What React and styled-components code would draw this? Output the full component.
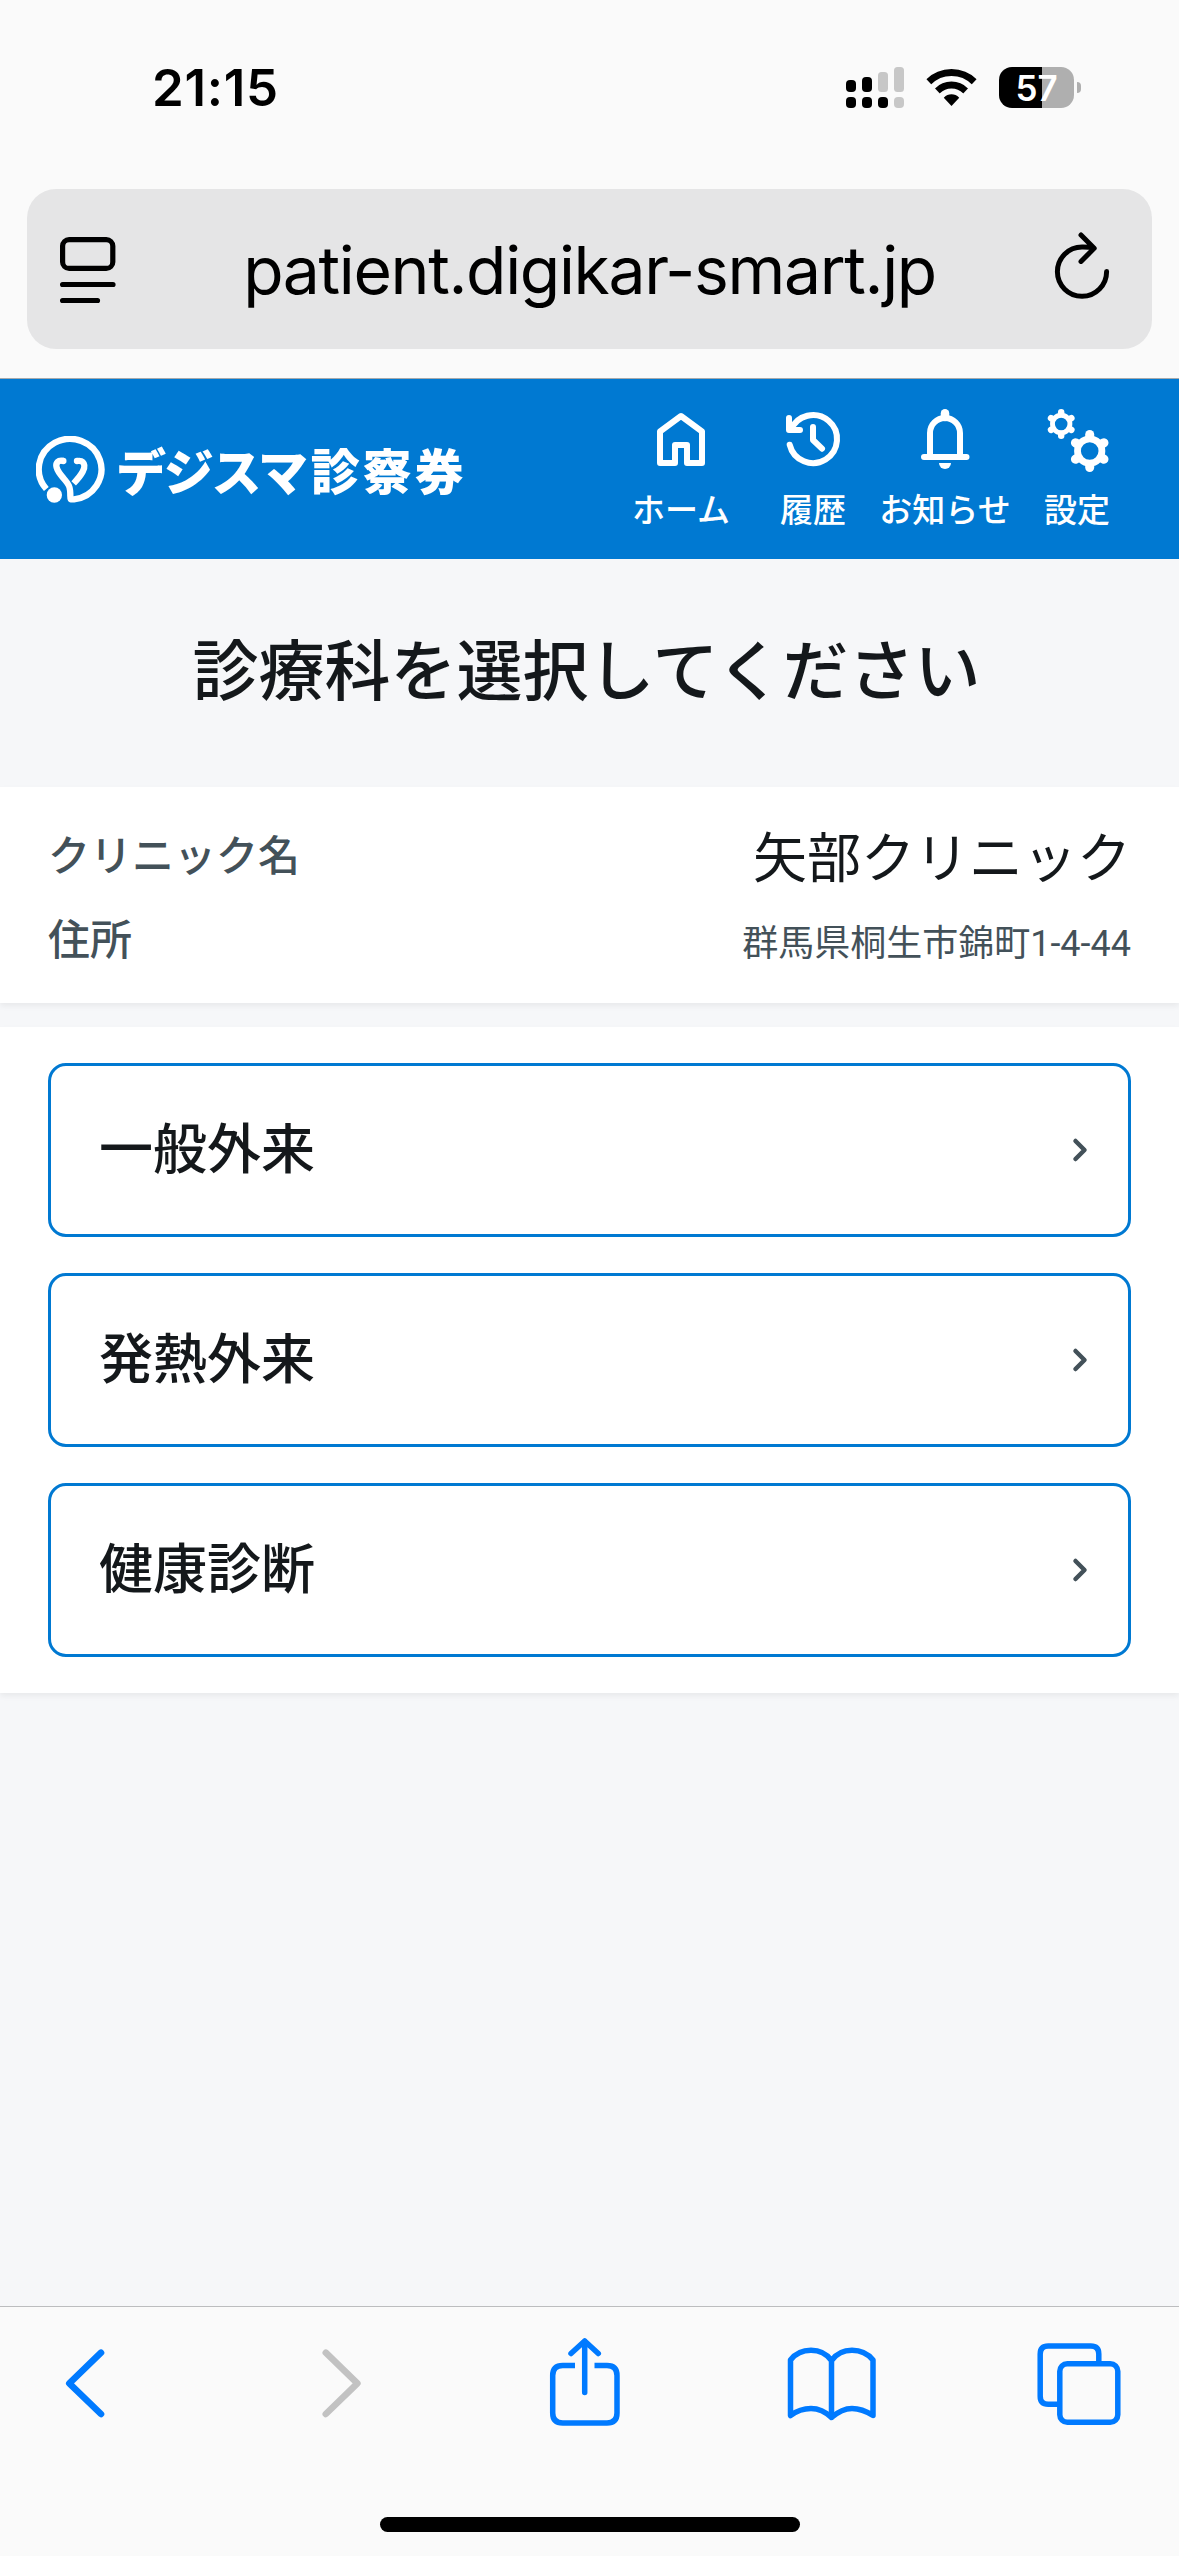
import React from 'react'
import styled, { createGlobalStyle } from 'styled-components'


const GlobalStyle = createGlobalStyle`
  * {
    box-sizing: border-box;
  }

  body {
    margin: 0;
    background: #f6f7f9;
    font-family: Roboto, 'Noto Sans CJK JP', sans-serif;
    color: #14181b;
  }

  svg {
    display: block;
    flex: none;
  }
`

const Screen = styled.div`
  display: flex;
  flex-direction: column;
  width: 1179px;
  height: 2556px;
  overflow: hidden;
`

const BrowserTop = styled.div`
  height: 379px;
  background: #fafafa;
  border-bottom: 1px solid #a5a9ac;
`

const StatusBar = styled.div`
  display: flex;
  align-items: center;
  justify-content: space-between;
  height: 189px;
  padding: 0 98px 14px 152px;
`

const Clock = styled.div`
  font-family: Inter, sans-serif;
  font-size: 51px;
  font-weight: 600;
  letter-spacing: 0.7px;
  color: #000;
`

const StatusIcons = styled.div`
  display: flex;
  align-items: center;
`

const WifiIcon = styled.svg`
  margin: 0 22px 0 22px;
`

const Battery = styled.div`
  display: flex;
  align-items: center;
  justify-content: center;
  width: 75px;
  height: 41px;
  border-radius: 13px;
  background: linear-gradient(to right, #000 ${props => props.$level}%, #afafaf ${props => props.$level}%);
  font-family: Inter, sans-serif;
  font-size: 35px;
  font-weight: 600;
  color: #fff;
`

const BatteryTip = styled.div`
  width: 4px;
  height: 11px;
  margin-left: 3px;
  border-radius: 0 4px 4px 0;
  background: #afafaf;
`

const AddressBar = styled.div`
  display: flex;
  align-items: center;
  justify-content: space-between;
  height: 160px;
  margin: 0 27px;
  padding: 2px 40px 0 31px;
  border-radius: 29px;
  background: #e5e5e6;
`

const Url = styled.div`
  font-family: Inter, sans-serif;
  font-size: 66px;
  letter-spacing: -1.35px;
  line-height: 80px;
  padding-left: 9px;
  color: #000;
`

const Header = styled.header`
  display: flex;
  align-items: center;
  justify-content: space-between;
  height: 180px;
  padding: 0 36px;
  background: #0079d2;
  color: #fff;
`

const Brand = styled.div`
  display: flex;
  align-items: center;
`

const BrandText = styled.div`
  font-family: 'Noto Sans CJK JP', sans-serif;
  font-size: ${props => props.$size}px;
  font-weight: 900;
  line-height: 60px;
  letter-spacing: ${props => props.$spacing}px;
  margin-left: ${props => props.$gap}px;
`

const Nav = styled.nav`
  display: flex;
`

const NavItem = styled.a`
  display: flex;
  flex-direction: column;
  align-items: center;
  width: 132px;
  font-size: 33px;
  font-weight: 500;
  line-height: 48px;
  white-space: nowrap;

  svg {
    margin-bottom: 11px;
  }
`

const Title = styled.h1`
  height: 228px;
  margin: 0;
  padding-right: 6px;
  font-size: 66px;
  font-weight: 500;
  line-height: 227px;
  text-align: center;
`

const Panel = styled.section`
  background: #fff;
  box-shadow: 0 3px 6px rgba(0, 0, 0, 0.06);
`

const ClinicInfo = styled(Panel)`
  height: 216px;
  margin-bottom: 24px;
  padding: 25px 48px 0;
`

const InfoRow = styled.div`
  display: flex;
  align-items: center;
  justify-content: space-between;
  height: 84px;
`

const InfoLabel = styled.div`
  padding-bottom: 3px;
  font-size: 42px;
  font-weight: 500;
  color: #435159;
`

const InfoValue = styled.div`
  font-size: ${props => props.$small ? 36 : 54}px;
  ${props => props.$small && `
    padding-top: 4px;
    color: #435159;
  `}
`

const DepartmentList = styled(Panel)`
  display: flex;
  flex-direction: column;
  gap: 36px;
  padding: 36px 48px;
`

const Department = styled.button`
  display: flex;
  align-items: center;
  justify-content: space-between;
  height: 174px;
  padding: 0 36px 0 48px;
  border: 3px solid #0079d2;
  border-radius: 18px;
  background: #fff;
  font: inherit;
  font-size: 54px;
  font-weight: 500;
  color: inherit;
`

const DepartmentName = styled.span`
  line-height: 80px;
  padding-top: 1px;
`

const BrowserBottom = styled.div`
  height: 250px;
  margin-top: auto;
  border-top: 1px solid #bcbdbf;
  background: #fafafa;
`

const Toolbar = styled.div`
  display: grid;
  grid-template-columns: 257px 243px 247px 246.5px 92px;
  padding: 29px 0 0 40px;
`

const ToolIcon = styled.svg.attrs({ width: 92, height: 92, viewBox: '0 0 92 92' })`
  fill: none;
  stroke: ${props => props.$disabled ? '#c2c2c2' : '#007aff'};
  stroke-width: ${props => props.$bold ? 6.6 : 5.5};
  stroke-linecap: round;
  stroke-linejoin: round;
`

const HomeIndicator = styled.div`
  width: 420px;
  height: 15px;
  margin: 89px auto 0 380px;
  border-radius: 8px;
  background: #000;
`

const NavIcon = styled.svg.attrs({ width: 72, height: 72, viewBox: '0 0 72 72' })`
  fill: none;
  stroke: #fff;
  stroke-width: 6;
  stroke-linecap: round;
  stroke-linejoin: round;
`

const SignalIcon = () =>
  <svg width="58" height="41" viewBox="0 0 58 41">
    <rect x="0" y="13" width="10" height="12" rx="4"/>
    <rect x="16" y="10" width="10" height="15" rx="4"/>
    <rect x="32" y="5" width="10" height="20" rx="3.5" fill="#c7c7c7"/>
    <rect x="48" y="0" width="10" height="25" rx="3.5" fill="#c7c7c7"/>
    <rect x="0" y="30" width="10" height="11" rx="4"/>
    <rect x="16" y="30" width="10" height="11" rx="4"/>
    <rect x="32" y="30" width="10" height="11" rx="4"/>
    <rect x="48" y="30" width="10" height="11" rx="4" fill="#c7c7c7"/>
  </svg>

const Wifi = () =>
  <WifiIcon width="51" height="41" viewBox="438 81 154 123">
    <clipPath id="wifi-fan">
      <path d="M515 198 405 80.7V60H625V80.7Z"/>
    </clipPath>
    <g clipPath="url(#wifi-fan)" fill="none" stroke="#000" strokeWidth="21">
      <circle cx="515" cy="195" r="98"/>
      <circle cx="515" cy="195" r="60"/>
      <circle cx="515" cy="195" r="16" strokeWidth="32"/>
    </g>
  </WifiIcon>

const PageMenuIcon = () =>
  <svg width="60" height="70" viewBox="58 235 60 70" fill="none" stroke="#000" strokeWidth="5.2" strokeLinecap="round">
    <rect x="62.6" y="239.6" width="50.2" height="28.8" rx="6.5"/>
    <path d="M62.6 284.5H113M62.6 300.5H97.5"/>
  </svg>

const ReloadIcon = () =>
  <svg width="60" height="70" viewBox="1052 235 60 70" fill="none" stroke="#000" strokeWidth="5" strokeLinecap="round" strokeLinejoin="round" overflow="visible">
    <path d="M1106.6 271.5A24.6 24.6 0 1 1 1082 247.1Q1089 247 1094 248.3M1081 235 1094.2 248.3 1081 261.4"/>
  </svg>

const BrandMark = () =>
  <svg width="69" height="67" viewBox="108 196 207 201" fill="none" stroke="#fff" strokeWidth="19" strokeLinejoin="round">
    <path d="M139 355A94 91 0 1 1 222 386H212Q211 386 211 376C211 345 206 341 189 321C169 298 162 279 177 271Q182 269 190 270.5" strokeLinecap="butt"/>
    <path d="M221 338C243 315 263 288 248 274Q243 269 231 271"/>
    <circle cx="190" cy="271" r="9.5" fill="#fff" stroke="none"/>
    <circle cx="231" cy="271" r="9.5" fill="#fff" stroke="none"/>
    <circle cx="163" cy="373" r="23" fill="#fff" stroke="none"/>
  </svg>

const HomeIcon = () =>
  <NavIcon>
    <path d="M36 12 57 27.5V59H42V41H30V59H15V27.5Z"/>
  </NavIcon>

const HistoryIcon = () =>
  <NavIcon>
    <path d="M12.7 40.7A24 24 0 1 0 13.8 26M12 14V26H23M36 23V36L45 44.7"/>
  </NavIcon>

const BellIcon = () =>
  <NavIcon>
    <path d="M21 53V29A15 15 0 0 1 51 29V53M15 53H57.5"/>
    <path d="M36 9.3V13" strokeWidth="8.5"/>
    <path d="M30 59H42A6 6 0 0 1 30 59Z" fill="#fff" stroke="none"/>
  </NavIcon>

const toothAngles = [0, 60, 120, 180, 240, 300]

const Gear = ({ x, y, scale }) =>
  <g transform={`translate(${x} ${y}) scale(${scale})`}>
    <circle r="12.2" strokeWidth="6.8"/>
    {toothAngles.map(angle =>
      <path key={angle} d="M0 -14V-16.5" strokeWidth="9" transform={`rotate(${angle})`}/>
    )}
  </g>

const SettingsIcon = () =>
  <NavIcon>
    <Gear x={20.2} y={20} scale={0.714}/>
    <Gear x={48.7} y={47} scale={1}/>
  </NavIcon>

const ChevronIcon = () =>
  <svg width="24" height="30" viewBox="0 0 24 30" fill="none" stroke="#435159" strokeWidth="4.5" strokeLinecap="round" strokeLinejoin="round">
    <path d="M7.5 6 16.5 15 7.5 24"/>
  </svg>

const navItems = [
  { label: 'ホーム', Icon: HomeIcon },
  { label: '履歴', Icon: HistoryIcon },
  { label: 'お知らせ', Icon: BellIcon },
  { label: '設定', Icon: SettingsIcon },
]

const departments = ['一般外来', '発熱外来', '健康診断']

const App = () =>
  <Screen lang="ja">
    <GlobalStyle/>
    <BrowserTop>
      <StatusBar>
        <Clock>21:15</Clock>
        <StatusIcons>
          <SignalIcon/>
          <Wifi/>
          <Battery $level={57}>57</Battery>
          <BatteryTip/>
        </StatusIcons>
      </StatusBar>
      <AddressBar>
        <PageMenuIcon/>
        <Url>patient.digikar-smart.jp</Url>
        <ReloadIcon/>
      </AddressBar>
    </BrowserTop>

    <Header>
      <Brand>
        <BrandMark/>
        <BrandText $size={50} $spacing={-2.2} $gap={11}>デジスマ</BrandText>
        <BrandText $size={49} $spacing={3} $gap={5}>診察券</BrandText>
      </Brand>
      <Nav>
        {navItems.map(({ label, Icon }) =>
          <NavItem key={label}>
            <Icon/>
            {label}
          </NavItem>
        )}
      </Nav>
    </Header>

    <Title>診療科を選択してください</Title>

    <ClinicInfo>
      <InfoRow>
        <InfoLabel>クリニック名</InfoLabel>
        <InfoValue>矢部クリニック</InfoValue>
      </InfoRow>
      <InfoRow>
        <InfoLabel>住所</InfoLabel>
        <InfoValue $small>群馬県桐生市錦町1-4-44</InfoValue>
      </InfoRow>
    </ClinicInfo>

    <DepartmentList>
      {departments.map(name =>
        <Department key={name}>
          <DepartmentName>{name}</DepartmentName>
          <ChevronIcon/>
        </Department>
      )}
    </DepartmentList>

    <BrowserBottom>
      <Toolbar>
        <ToolIcon $bold>
          <path d="M61 16.7 29.3 47.3 61 78"/>
        </ToolIcon>
        <ToolIcon $bold $disabled>
          <path d="M28.8 16.7 60.4 47.3 28.8 78"/>
        </ToolIcon>
        <ToolIcon>
          <path d="M35 29.6H22.7Q12.7 29.6 12.7 39.6V77Q12.7 87 22.7 87H67Q77 87 77 77V39.6Q77 29.6 67 29.6H54.5" strokeLinecap="butt"/>
          <path d="M44.7 56.5V5M31 17.5 44.7 5 58.3 17.5"/>
        </ToolIcon>
        <ToolIcon>
          <path d="M3.5 79.5V24Q11 14.3 24 14.3T44.5 24.5Q52 14.3 65 14.3T86 24V79.5Q75 72.5 65 72.5T44.5 81.5Q35 72.5 24 72.5T3.5 79.5ZM44.5 24.5V81.5"/>
        </ToolIcon>
        <ToolIcon>
          <path d="M64.8 27V18Q64.8 10 56.8 10H14.2Q6.2 10 6.2 18V60.3Q6.2 68.3 14.2 68.3H25" strokeLinecap="butt"/>
          <rect x="25.8" y="27.7" width="58" height="58.6" rx="7.5"/>
        </ToolIcon>
      </Toolbar>
      <HomeIndicator/>
    </BrowserBottom>
  </Screen>

export default App
